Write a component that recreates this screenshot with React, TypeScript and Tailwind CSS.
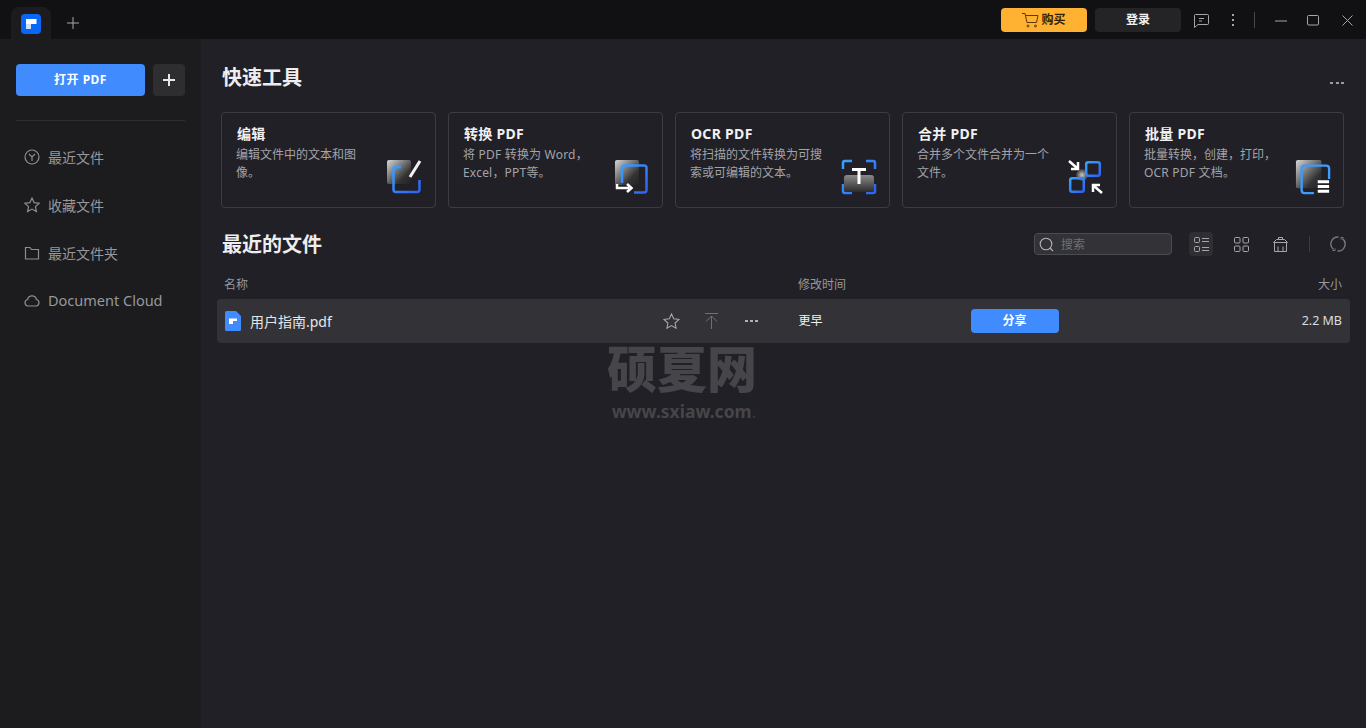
import type { ReactNode } from "react";

const font = "font-['Noto_Sans','Noto_Sans_CJK_SC',sans-serif]";

function Logo() {
  return (
    <svg width="20" height="20" viewBox="0 0 20 20">
      <rect width="20" height="20" rx="4" fill="#0a66f5" />
      <path d="M5 5h10.500v5H10v5H5z" fill="#fff" />
      <path d="M5 10h5v5H5z" fill="#cfe0ff" />
    </svg>
  );
}

function Defs() {
  return (
    <svg width="0" height="0" className="absolute">
      <defs>
        <linearGradient id="grey" x1="0" y1="0" x2="1" y2="1">
          <stop offset="0" stopColor="#d8d8d8" />
          <stop offset="0.7" stopColor="#333" />
          <stop offset="1" stopColor="#222" />
        </linearGradient>
        <linearGradient id="greyV" x1="0" y1="0" x2="0" y2="1">
          <stop offset="0" stopColor="#8a8a8a" />
          <stop offset="1" stopColor="#2c2c2e" />
        </linearGradient>
        <radialGradient id="greyR">
          <stop offset="0" stopColor="#c8c8c8" />
          <stop offset="1" stopColor="#3a3a3c" />
        </radialGradient>
        <linearGradient id="blue" x1="0" y1="0" x2="1" y2="1">
          <stop offset="0" stopColor="#38a0ff" />
          <stop offset="1" stopColor="#2f62f0" />
        </linearGradient>
      </defs>
    </svg>
  );
}

function EditArt() {
  return (
    <svg width="36" height="36" viewBox="0 0 36 36" fill="none">
      <rect x="0" y="1" width="24" height="24" rx="2" fill="url(#grey)" />
      <path d="M14 8H9a2.500 2.500 0 0 0-2.500 2.500v20A2.500 2.500 0 0 0 9 33h21a2.500 2.500 0 0 0 2.500-2.500V21" stroke="url(#blue)" strokeWidth="2.500" />
      <path d="M23 18 33 2" stroke="#f2f2f2" strokeWidth="3" />
    </svg>
  );
}

function ConvertArt() {
  return (
    <svg width="36" height="36" viewBox="0 0 36 36" fill="none">
      <rect x="1" y="1" width="24" height="25" rx="2" fill="url(#grey)" />
      <path d="M8 24V9a2.500 2.500 0 0 1 2.500-2.500H30A2.500 2.500 0 0 1 32.500 9v22a2.500 2.500 0 0 1-2.500 2.500h-10" stroke="url(#blue)" strokeWidth="2.500" />
      <path d="M3 25v4h12" stroke="#fff" strokeWidth="2.500" />
      <path d="M13 25l4.500 4-4.500 4" stroke="#fff" strokeWidth="2.500" />
    </svg>
  );
}

function OcrArt() {
  return (
    <svg width="36" height="36" viewBox="0 0 36 36" fill="none">
      <path d="M2 10V4a2 2 0 0 1 2-2h7M25 2h7a2 2 0 0 1 2 2v6M2 25v7a2 2 0 0 0 2 2h7M25 34h7a2 2 0 0 0 2-2v-7" stroke="url(#blue)" strokeWidth="2.500" />
      <rect x="3" y="16" width="30" height="17" rx="3" fill="url(#greyV)" />
      <path d="M11 10.500h14M18 10.500V25" stroke="#fff" strokeWidth="3" />
    </svg>
  );
}

function MergeArt() {
  return (
    <svg width="36" height="38" viewBox="0 0 36 38" fill="none">
      <circle cx="14" cy="18" r="6" fill="url(#greyR)" />
      <rect x="18.200" y="5.200" width="13.600" height="13.600" rx="2" stroke="url(#blue)" strokeWidth="2.500" />
      <rect x="2.200" y="21.200" width="13.600" height="13.600" rx="2" stroke="url(#blue)" strokeWidth="2.500" />
      <path d="M1 4l8 7M3 12h7V5" stroke="#fff" strokeWidth="2.500" />
      <path d="M34 36l-8-7M32 28h-7v7" stroke="#fff" strokeWidth="2.500" />
    </svg>
  );
}

function BatchArt() {
  return (
    <svg width="36" height="36" viewBox="0 0 38 38" fill="none">
      <rect x="1" y="1" width="27" height="30" rx="2" fill="url(#grey)" />
      <path d="M7 33V10a3 3 0 0 1 3-3h23a3 3 0 0 1 3 3v11M7 33a3 3 0 0 0 3 3h10" stroke="#3d9bff" strokeWidth="2.500" />
      <path d="M24 24h12M24 29h12M24 34h12" stroke="#fff" strokeWidth="3" />
    </svg>
  );
}

function ToolCard({ title, lines, art }: { title: string; lines: string[]; art: ReactNode }) {
  return (
    <div className="relative h-[96px] flex-1 rounded-[4px] border border-[#3c3c41] pl-[15px] pt-[11px]">
      <div className="text-[14px] leading-[20px] font-bold tracking-[0.3px] text-[#f1f1f3]">{title}</div>
      <div className="-ml-px mt-[2px] text-[12px] leading-[17.500px] whitespace-nowrap text-[#a3a3a8]">
        {lines.map((l) => (
          <div key={l} className={/[A-Za-z]/.test(l) ? "tracking-[0.2px]" : "tracking-normal"}>
            {l}
          </div>
        ))}
      </div>
      <div className="absolute right-[12px] bottom-[12px]">{art}</div>
    </div>
  );
}

function NavItem({ icon, label }: { icon: ReactNode; label: string }) {
  return (
    <div className="flex h-[48px] items-center gap-[8px] pl-[24px] text-[14px] text-[#97979c]">
      <span className="flex w-[16px] justify-center">{icon}</span>
      <span className={label === "Document Cloud" ? "text-[14.500px]" : "text-[14px]"}>{label}</span>
    </div>
  );
}

const navIconProps = { width: 16, height: 16, viewBox: "0 0 16 16", fill: "none", stroke: "#8d8d90", strokeWidth: 1.2 };

export default function App() {
  return (
    <div className={`${font} flex h-[728px] w-[1366px] flex-col overflow-hidden bg-[#202026]`}>
      <Defs />
      {/* Title bar */}
      <header className="flex h-[39px] shrink-0 items-end bg-[#111113] pl-[11px]">
        <div className="flex h-[32px] w-[40px] items-center justify-center rounded-t-[8px] bg-[#1c1c1e] pt-[1px]">
          <Logo />
        </div>
        <svg width="12" height="12" viewBox="0 0 12 12" className="mb-[10px] ml-[16px]" stroke="#a8a8ac" strokeWidth="1">
          <path d="M6 0v12M0 6h12" />
        </svg>
        <div className="ml-auto flex h-full items-start pt-[8px]">
          <div className="flex h-[24px] w-[86px] items-center justify-center gap-[2px] rounded-[4px] bg-[#ffb232] text-[12px] font-semibold text-[#331f00]">
            <svg width="17" height="15" viewBox="0 0 17 15" fill="none" stroke="#5c3a00" strokeWidth="1">
              <path d="M0 .500h3l2 9h9.500l1.500-7H3.500" />
              <circle cx="6" cy="13" r="1" />
              <circle cx="13.500" cy="13" r="1" />
            </svg>
            购买
          </div>
          <div className="ml-[8px] flex h-[24px] w-[86px] items-center justify-center rounded-[4px] bg-[#242426] text-[12px] font-bold text-[#f2f2f4]">
            登录
          </div>
          <svg width="15" height="14" viewBox="0 0 15 14" fill="none" stroke="#a5a5ac" strokeWidth="1" className="ml-[13px] mt-[6px]">
            <path d="M1.500.500h12a1 1 0 0 1 1 1v8a1 1 0 0 1-1 1H4l-3.500 3V1.500a1 1 0 0 1 1-1z" />
            <path d="M5 4.500h5M5 7h3" />
          </svg>
          <div className="ml-[23px] mt-[6px] flex h-[12px] w-[3px] flex-col justify-between">
            <span className="h-[2px] w-[2px] bg-[#a5a5ac]" />
            <span className="h-[2px] w-[2px] bg-[#a5a5ac]" />
            <span className="h-[2px] w-[2px] bg-[#a5a5ac]" />
          </div>
          <div className="ml-[19px] mt-[4px] h-[16px] w-px bg-[#47474c]" />
          <svg width="12" height="2" viewBox="0 0 12 2" className="ml-[20px] mt-[12px]" stroke="#a5a5ac">
            <path d="M0 1h12" />
          </svg>
          <svg width="12" height="11" viewBox="0 0 12 11" fill="none" stroke="#a5a5ac" className="ml-[20px] mt-[7px]">
            <rect x=".500" y=".500" width="11" height="9.500" rx="1" />
          </svg>
          <svg width="11" height="11" viewBox="0 0 11 11" stroke="#a5a5ac" className="ml-[23px] mr-[13px] mt-[7px]">
            <path d="M.500.500l10 10M10.500.500l-10 10" />
          </svg>
        </div>
      </header>

      <div className="flex min-h-0 flex-1">
        {/* Sidebar */}
        <aside className="w-[201px] shrink-0 bg-[#1c1c1e] px-[16px] pt-[25px]">
          <div className="flex gap-[8px]">
            <div className="flex h-[32px] w-[129px] items-center justify-center rounded-[4px] bg-[#408cff] text-[12px] font-bold tracking-[0.5px] text-white">
              打开 PDF
            </div>
            <div className="flex h-[32px] w-[32px] items-center justify-center rounded-[4px] bg-[#2e2e30]">
              <svg width="12" height="12" viewBox="0 0 12 12" stroke="#e8e8e8" strokeWidth="2">
                <path d="M6 0v12M0 6h12" />
              </svg>
            </div>
          </div>
          <div className="mt-[24px] h-px bg-[#2e2e30]" />
          <nav className="-mx-[16px] mt-[12px]">
            <NavItem
              label="最近文件"
              icon={
                <svg {...navIconProps}>
                  <circle cx="8" cy="8" r="7" />
                  <path d="M5 5l3 3 3-3M8 8v4" />
                </svg>
              }
            />
            <NavItem
              label="收藏文件"
              icon={
                <svg {...navIconProps}>
                  <path d="M8 1l2.100 4.600 5 .6-3.700 3.400 1 5L8 12.100 3.600 14.600l1-5L.900 6.200l5-.6z" />
                </svg>
              }
            />
            <NavItem
              label="最近文件夹"
              icon={
                <svg {...navIconProps}>
                  <path d="M1.500 2.500h4.500l1.500 2h7v9.500h-13z" />
                </svg>
              }
            />
            <NavItem
              label="Document Cloud"
              icon={
                <svg {...navIconProps}>
                  <path d="M4 13a3.300 3.300 0 0 1-.4-6.500 4.500 4.500 0 0 1 8.800 0A3.300 3.300 0 0 1 12 13z" />
                </svg>
              }
            />
          </nav>
        </aside>

        {/* Main */}
        <main className="relative min-w-0 flex-1 pt-[24px]">
          <div className="flex items-center justify-between pl-[21px] pr-[22px]">
            <h2 className="h-[28px] text-[20px] leading-[30px] font-bold text-[#eeeef0]">快速工具</h2>
            <div className="mt-[12px] flex gap-[2.500px]">
              <span className="h-[2px] w-[3px] bg-[#9a9aa2]" />
              <span className="h-[2px] w-[3px] bg-[#9a9aa2]" />
              <span className="h-[2px] w-[3px] bg-[#9a9aa2]" />
            </div>
          </div>

          <div className="mt-[21px] flex gap-[12px] pl-[20px] pr-[22px]">
            <ToolCard title="编辑" lines={["编辑文件中的文本和图", "像。"]} art={<EditArt />} />
            <ToolCard title="转换 PDF" lines={["将 PDF 转换为 Word，", "Excel，PPT等。"]} art={<ConvertArt />} />
            <ToolCard title="OCR PDF" lines={["将扫描的文件转换为可搜", "索或可编辑的文本。"]} art={<OcrArt />} />
            <ToolCard title="合并 PDF" lines={["合并多个文件合并为一个", "文件。"]} art={<MergeArt />} />
            <ToolCard title="批量 PDF" lines={["批量转换，创建，打印，", "OCR PDF 文档。"]} art={<BatchArt />} />
          </div>

          <div className="mt-[22px] flex h-[28px] items-center pl-[21px] pr-[20px]">
            <h2 className="h-[28px] text-[20px] leading-[30px] font-bold text-[#eeeef0]">最近的文件</h2>
            <div className="ml-auto flex items-center">
              <div className="flex h-[22px] w-[138px] items-center gap-[7px] rounded-[4px] border border-[#4c4c50] bg-[#333337] pl-[4px] text-[12px] text-[#6f6f74]">
                <svg width="15" height="15" viewBox="0 0 15 15" fill="none" stroke="#b5b5b8" strokeWidth="1.100">
                  <circle cx="7" cy="7" r="5.800" />
                  <path d="M11 11l3 3" />
                </svg>
                <span className="pt-px">搜索</span>
              </div>
              <div className="ml-[17px] flex h-[24px] w-[24px] items-center justify-center rounded-[4px] bg-[#2e2e33]">
                <svg width="15" height="15" viewBox="0 0 15 15" fill="none" stroke="#a5a5ac">
                  <rect x=".500" y=".500" width="5" height="5" rx="1" />
                  <rect x=".500" y="9.500" width="5" height="5" rx="1" />
                  <path d="M8 1.500h7M8 4.500h7M8 10.500h7M8 13.500h7" />
                </svg>
              </div>
              <svg width="15" height="15" viewBox="0 0 15 15" fill="none" stroke="#a5a5ac" className="ml-[21px]">
                <rect x=".500" y=".500" width="5.500" height="5.500" rx="1" />
                <rect x="9" y=".500" width="5.500" height="5.500" rx="1" />
                <rect x=".500" y="9" width="5.500" height="5.500" rx="1" />
                <rect x="9" y="9" width="5.500" height="5.500" rx="1" />
              </svg>
              <svg width="15" height="15" viewBox="0 0 15 15" fill="none" stroke="#a5a5ac" className="ml-[24px]">
                <path d="M5.500 2.500V.5h4v2M3.500 2.500h8l3 3h-14zM1.500 5.500v9h12v-9M5 14.500V9.500M10 14.500V9.500" />
              </svg>
              <div className="ml-[21px] h-[16px] w-px bg-[#3c3c40]" />
              <svg width="16" height="16" viewBox="0 0 16 16" fill="none" stroke="#77777c" strokeWidth="1.400" className="ml-[20px]">
                <path d="M8.500 1A7 7 0 0 0 3.500 13.400" />
                <path d="M7.500 15A7 7 0 0 0 12.500 2.600" />
                <path d="M2.500 14.500h2.500v-2M13.500 1.500H11v2" strokeWidth="1" />
              </svg>
            </div>
          </div>

          {/* Table */}
          <div className="mt-[14px] flex h-[26px] items-center pl-[23px] pr-[24px] text-[12px] text-[#97979c]">
            <span className="w-[574px]">名称</span>
            <span>修改时间</span>
            <span className="ml-auto">大小</span>
          </div>
          <div className="mx-[16px] mt-[1px] flex h-[44px] items-center rounded-[4px] bg-[#333337] px-[8px]">
            <svg width="16" height="20" viewBox="0 0 16 20" className="shrink-0">
              <path d="M1.500 0H11l5 5v13.500a1.500 1.500 0 0 1-1.500 1.500h-13A1.500 1.500 0 0 1 0 18.500v-17A1.500 1.500 0 0 1 1.500 0z" fill="#408cff" />
              <path d="M4 7.500h8v2.500H8v3H4z" fill="#fff" />
            </svg>
            <span className="ml-[9px] w-[413px] text-[14px] text-[#e6e6ea]">用户指南.pdf</span>
            <svg width="17" height="16" viewBox="0 0 17 16" fill="none" stroke="#a5a5ac" strokeWidth="1.100">
              <path d="M8.500 1l2.200 4.700 5.300.7-3.900 3.600 1 5.200-4.600-2.600-4.600 2.600 1-5.200L1 6.400l5.300-.7z" />
            </svg>
            <svg width="13" height="16" viewBox="0 0 13 16" fill="none" stroke="#6b6f80" className="ml-[25px]">
              <path d="M0 .500h13M6.500 16V3M1 8.500l5.500-5.500L12 8.500" />
            </svg>
            <div className="ml-[27px] flex gap-[2.500px]">
              <span className="h-[2px] w-[2.500px] bg-[#b0b0b5]" />
              <span className="h-[2px] w-[2.500px] bg-[#b0b0b5]" />
              <span className="h-[2px] w-[2.500px] bg-[#b0b0b5]" />
            </div>
            <span className="ml-[41px] w-[172px] text-[12px] text-[#f0f0f2]">更早</span>
            <div className="flex h-[24px] w-[88px] items-center justify-center rounded-[4px] bg-[#408cff] text-[12px] font-bold text-white">
              分享
            </div>
            <span className="ml-auto text-[12.500px] text-[#dcdce0]">2.2 MB</span>
          </div>

          {/* Watermark */}
          <div className="pointer-events-none absolute left-[406px] top-[302px] flex w-[150px] flex-col items-center text-[#46464a]">
            <span className="text-[50px] leading-[56px] font-black whitespace-nowrap">硕夏网</span>
            <span className="ml-[4px] mt-[4px] text-[17.500px] leading-[20px] font-bold whitespace-nowrap">
              www.sxiaw.com<span className="font-normal text-[#3a3a3e]">.</span>
            </span>
          </div>
        </main>
      </div>
    </div>
  );
}
